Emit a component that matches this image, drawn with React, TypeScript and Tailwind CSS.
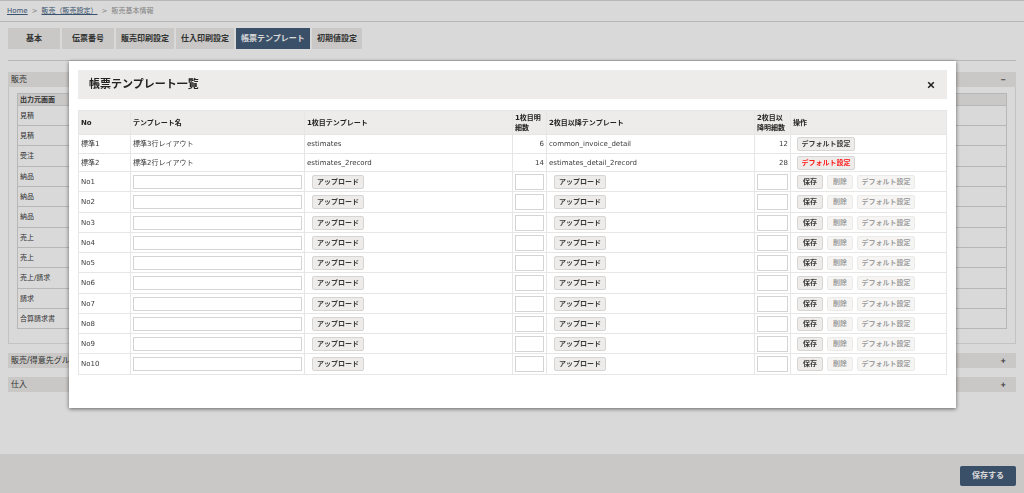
import { useState } from "react";
import clsx from "clsx";

const tabs = [
  { label: "基本", width: "w-[52px]" },
  { label: "伝票番号", width: "w-[52px]" },
  { label: "販売印刷設定", width: "w-[58px]" },
  { label: "仕入印刷設定", width: "w-[58px]" },
  { label: "帳票テンプレート", width: "w-[74px]" },
  { label: "初期値設定", width: "w-[50px]" },
];

const sources = ["見積", "見積", "受注", "納品", "納品", "納品", "売上", "売上", "売上/請求", "請求", "合算請求書"];

const standards = [
  { no: "標準1", name: "標準3行レイアウト", first: "estimates", firstRows: 6, next: "common_invoice_detail", nextRows: 12, isDefault: false },
  { no: "標準2", name: "標準2行レイアウト", first: "estimates_2record", firstRows: 14, next: "estimates_detail_2record", nextRows: 28, isDefault: true },
];

const customs = Array.from({ length: 10 }, (_, i) => `No${i + 1}`);

const cell = "border border-[#e6e6e6] px-[2px]";

type SmallButtonProps = {
  children: string;
  className?: string;
  disabled?: boolean;
};

const SmallButton = ({ children, className, disabled }: SmallButtonProps) => (
  <button
    type="button"
    disabled={disabled}
    className={clsx(
      "h-[14px] rounded-[2px] border border-[#d6d5d4] bg-[#edecea] text-center text-[7px] leading-[12px] font-bold whitespace-nowrap disabled:opacity-50",
      className
    )}
  >
    {children}
  </button>
);

const SectionHeader = ({ title, sign }: { title: string; sign: string }) => (
  <button
    type="button"
    className="flex h-[15px] w-full items-center justify-between bg-[#edebe9] pr-[10px] pl-[3px] text-[8px] leading-[14px]"
  >
    <span>{title}</span>
    <span className="text-[7px] font-bold">{sign}</span>
  </button>
);

const TemplateTable = () => (
  <table className="w-full table-fixed border-collapse text-[7px] leading-[10px]">
    <colgroup>
      <col className="w-[52px]" />
      <col className="w-[174px]" />
      <col />
      <col className="w-[34px]" />
      <col />
      <col className="w-[36px]" />
      <col className="w-[156px]" />
    </colgroup>
    <thead>
      <tr className="h-[24px] bg-[#edecea] text-left text-[#222]">
        <th className={cell}>No</th>
        <th className={cell}>テンプレート名</th>
        <th className={cell}>1枚目テンプレート</th>
        <th className={cell}>1枚目明細数</th>
        <th className={cell}>2枚目以降テンプレート</th>
        <th className={cell}>2枚目以降明細数</th>
        <th className={cell}>操作</th>
      </tr>
    </thead>
    <tbody>
      {standards.map((row) => (
        <tr key={row.no} className="h-[19px] nth-2:h-[18px]">
          <td className={cell}>{row.no}</td>
          <td className={cell}>{row.name}</td>
          <td className={cell}>{row.first}</td>
          <td className={clsx(cell, "text-right")}>{row.firstRows}</td>
          <td className={cell}>{row.next}</td>
          <td className={clsx(cell, "text-right")}>{row.nextRows}</td>
          <td className={cell}>
            <div className="flex pl-[4px]">
              <SmallButton className={clsx("w-[58px]", row.isDefault && "text-[#ff1a1a]")}>デフォルト設定</SmallButton>
            </div>
          </td>
        </tr>
      ))}
      {customs.map((no) => (
        <tr key={no} className="h-[20px] nth-[4n]:h-[21px]">
          <td className={cell}>{no}</td>
          <td className={cell}>
            <input
              type="text"
              aria-label={`${no} テンプレート名`}
              className="block h-[14px] w-full border border-[#d4d4d4] bg-white px-[2px]"
            />
          </td>
          <td className={cell}>
            <div className="flex pl-[5px]">
              <SmallButton className="w-[52px]">アップロード</SmallButton>
            </div>
          </td>
          <td className={cell}>
            <input
              type="text"
              aria-label={`${no} 1枚目明細数`}
              className="block h-[16px] w-full border border-[#d4d4d4] bg-white px-[2px] text-right"
            />
          </td>
          <td className={cell}>
            <div className="flex pl-[5px]">
              <SmallButton className="w-[52px]">アップロード</SmallButton>
            </div>
          </td>
          <td className={cell}>
            <input
              type="text"
              aria-label={`${no} 2枚目以降明細数`}
              className="block h-[16px] w-full border border-[#d4d4d4] bg-white px-[2px] text-right"
            />
          </td>
          <td className={cell}>
            <div className="flex gap-[4px] pl-[4px]">
              <SmallButton className="w-[26px]">保存</SmallButton>
              <SmallButton className="w-[26px]" disabled>
                削除
              </SmallButton>
              <SmallButton className="w-[58px]" disabled>
                デフォルト設定
              </SmallButton>
            </div>
          </td>
        </tr>
      ))}
    </tbody>
  </table>
);

export default function App() {
  const [open, setOpen] = useState(true);

  return (
    <div className="flex min-h-screen flex-col bg-white font-['DejaVu_Sans','Noto_Sans_CJK_JP',sans-serif] text-[#3a3a3a]">
      {/* Breadcrumb */}
      <nav className="flex h-[22px] items-center gap-[4px] border-y border-[#d8d8d8] px-[7px] text-[7px] leading-[10px] text-[#999]">
        <a href="#home" className="text-[#46627f] underline">
          Home
        </a>
        <span>&gt;</span>
        <a href="#sales" className="text-[#46627f] underline">
          販売（販売設定）
        </a>
        <span>&gt;</span>
        <span>販売基本情報</span>
      </nav>

      <main className="flex-1 px-[8px] pt-[6px]">
        {/* Tabs */}
        <div className="flex gap-[2px] border-b border-[#d8d8d8] pb-[11px]">
          {tabs.map((tab, index) => (
            <button
              key={tab.label}
              type="button"
              className={clsx(
                "h-[21px] text-[8px] leading-[21px] font-bold whitespace-nowrap",
                tab.width,
                index === 4 ? "bg-[#455e7b] text-white" : "bg-[#edebe9]"
              )}
            >
              {tab.label}
            </button>
          ))}
        </div>

        <section className="mt-[11px]">
          <SectionHeader title="販売" sign="−" />
          <div className="border border-t-0 border-[#e6e6e6] px-[8px] pt-[6px] pb-[14px]">
            <table className="w-full border-collapse text-left text-[7px] leading-[10px]">
              <thead>
                <tr className="h-[12px] bg-[#edebe9]">
                  <th className="border border-[#d8d8d8] px-[2px]">出力元画面</th>
                </tr>
              </thead>
              <tbody>
                {sources.map((source, index) => (
                  <tr key={index} className="h-[20px] nth-[3n]:h-[21px]">
                    <td className="border border-[#d8d8d8] px-[2px]">{source}</td>
                  </tr>
                ))}
              </tbody>
            </table>
          </div>
        </section>
        <section className="mt-[9px]">
          <SectionHeader title="販売/得意先グループ" sign="+" />
        </section>
        <section className="mt-[9px]">
          <SectionHeader title="仕入" sign="+" />
        </section>
      </main>

      <footer className="flex h-[39px] items-center justify-end bg-[#edebe9] px-[8px] pt-[5px]">
        <button type="button" className="h-[20px] w-[56px] rounded-[2px] bg-[#455e7b] text-[8px] font-bold text-white">
          保存する
        </button>
      </footer>

      {/* Template list dialog */}
      {open && (
        <div className="fixed inset-0 flex items-start bg-black/15 pt-[61px] pr-[68px] pl-[69px]">
          <div
            role="dialog"
            aria-modal="true"
            aria-labelledby="template-list-title"
            className="w-full bg-white px-[9px] pt-[9px] pb-[33px] shadow-[0_1px_4px_rgba(0,0,0,0.55)]"
          >
            <div className="mb-[11px] flex h-[29px] items-center justify-between bg-[#edecea] pr-[12px] pl-[11px] text-[#222]">
              <h2 id="template-list-title" className="text-[11px] leading-[16px] font-bold">
                帳票テンプレート一覧
              </h2>
              <button type="button" aria-label="閉じる" onClick={() => setOpen(false)}>
                <svg viewBox="0 0 8 8" className="block size-[8px]" fill="none" stroke="currentColor" strokeWidth="1.6">
                  <path d="M1.2 1.2L6.8 6.8M6.8 1.2L1.2 6.8" />
                </svg>
              </button>
            </div>
            <TemplateTable />
          </div>
        </div>
      )}
    </div>
  );
}
